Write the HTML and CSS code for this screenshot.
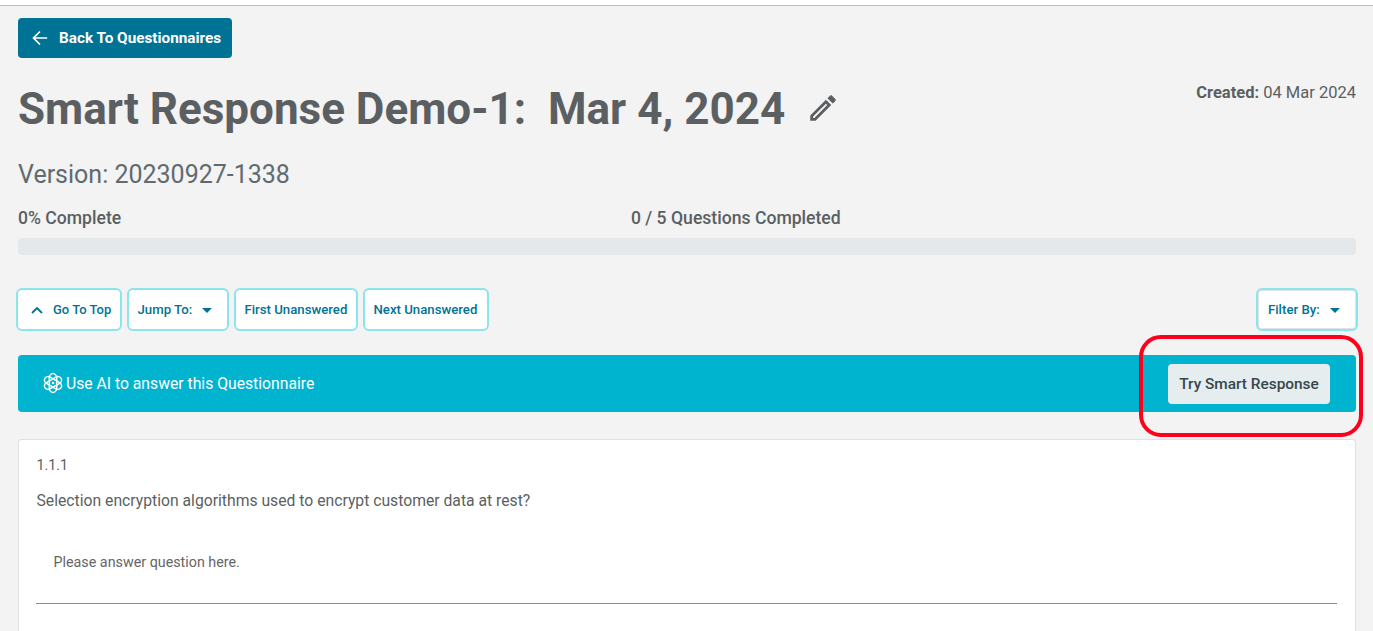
FILE: index.html
```html
<!DOCTYPE html>
<html lang="en">
<head>
  <meta charset="UTF-8">
  <meta name="viewport" content="width=device-width, initial-scale=1.0">
  <title>Smart Response Demo-1</title>
  <link rel="stylesheet" href="styles.css">
</head>
<body>
  <div class="topbar"></div>

  <main class="page">
    <button class="back-button">
      <svg width="16" height="16" viewBox="0 0 16 16"><path d="M15.2 8H1.8M8 1.5L1.5 8L8 14.5" fill="none" stroke="currentColor" stroke-width="1.7"/></svg>
      <span>Back To Questionnaires</span>
    </button>

    <!-- Title and date -->
    <header class="heading">
      <h1>Smart Response Demo-1:&nbsp; Mar 4, 2024</h1>
      <svg class="edit-icon" width="34" height="34" viewBox="0 0 24 24"><path fill="currentColor" d="M14.06 9.02l.92.92L5.92 19H5v-.92l9.06-9.06M17.66 3c-.25 0-.51.1-.7.29l-1.83 1.83 3.75 3.75 1.83-1.83c.39-.39.39-1.02 0-1.41l-2.34-2.34c-.2-.2-.45-.29-.71-.29zm-3.6 3.19L3 17.25V21h3.75L17.81 9.94l-3.75-3.75z"/></svg>
      <p class="created"><b>Created:</b> 04 Mar 2024</p>
    </header>
    <h2 class="version">Version: 20230927-1338</h2>

    <!-- Progress -->
    <div class="progress-labels">
      <span class="percent">0% Complete</span>
      <span class="count">0 / 5 Questions Completed</span>
    </div>
    <div class="progress"></div>

    <nav class="toolbar">
      <button class="tool go-top">
        <svg width="12" height="8" viewBox="0 0 12 8"><path d="M1 7L6 2L11 7" fill="none" stroke="currentColor" stroke-width="1.8"/></svg>
        <span>Go To Top</span>
      </button>
      <button class="tool jump"><span>Jump To:</span><i class="caret"></i></button>
      <button class="tool first"><span>First Unanswered</span></button>
      <button class="tool next"><span>Next Unanswered</span></button>
      <button class="tool filter"><span>Filter By:</span><i class="caret"></i></button>
    </nav>

    <!-- AI banner -->
    <section class="banner">
      <svg class="atom" width="20" height="22" viewBox="0 0 20 22">
        <g fill="none" stroke="currentColor" stroke-width="1.5">
          <rect x="6.3" y="1.6" width="7.4" height="18.8" rx="3.7" ry="4.4"/>
          <rect x="6.3" y="1.6" width="7.4" height="18.8" rx="3.7" ry="4.4" transform="rotate(60 10 11)"/>
          <rect x="6.3" y="1.6" width="7.4" height="18.8" rx="3.7" ry="4.4" transform="rotate(120 10 11)"/>
        </g>
        <circle cx="10" cy="11" r="1.3" fill="currentColor"/>
      </svg>
      <span class="banner-text">Use AI to answer this Questionnaire</span>
      <button class="smart-button"><span>Try Smart Response</span></button>
      <div class="highlight"></div>
    </section>

    <article class="question">
      <p class="number">1.1.1</p>
      <p class="text">Selection encryption algorithms used to encrypt customer data at rest?</p>
      <div class="answer"><span>Please answer question here.</span></div>
    </article>
  </main>
</body>
</html>
```
FILE: styles.css
```css
* {
  box-sizing: border-box;
}

body {
  margin: 0;
  background: #f3f3f3;
  color: #5b5f61;
  font-family: Roboto, sans-serif;
  font-size: 16px;
}

h1, h2, p {
  margin: 0;
}

button {
  display: flex;
  align-items: center;
  padding: 0;
  border: none;
  font-family: inherit;
  font-weight: 500;
  white-space: nowrap;
}

svg {
  flex: none;
}

.topbar {
  height: 6px;
  background: #fff;
  border-bottom: 1px solid #bdbdbd;
}

.page {
  padding: 12px 17px 0 18px;
}

.back-button {
  width: 214px;
  height: 40px;
  padding-left: 14px;
  gap: 11px;
  border-radius: 4px;
  background: #007394;
  color: #fff;
  font-size: 15.3px;
  font-weight: 700;
}

/* Heading */
.heading {
  display: flex;
  height: 92px;
  padding-top: 22px;
}

.heading h1 {
  font-size: 44px;
  line-height: 58px;
  font-weight: 700;
  white-space: nowrap;
}

.edit-icon {
  margin: 11px 0 0 21px;
}

.created {
  margin-left: auto;
  font-size: 16.5px;
  line-height: 25px;
}

.version {
  height: 50px;
  color: #5f6b70;
  font-size: 25px;
  line-height: 50px;
  font-weight: 400;
}

/* Progress */
.progress-labels {
  display: flex;
  height: 38px;
  font-size: 17.6px;
  line-height: 36px;
  font-weight: 500;
}

.percent {
  width: 613px;
}

.progress {
  height: 17px;
  border-radius: 4px;
  background: #e4e8eb;
}

/* Toolbar */
.toolbar {
  display: flex;
  gap: 5px;
  margin: 33px -2px 24px;
}

.tool {
  height: 43px;
  padding-left: 8.5px;
  border: 2px solid #8ce4ec;
  border-radius: 6px;
  background: #fff;
  color: #007394;
  font-size: 13.2px;
}

.go-top {
  width: 106px;
  padding-left: 13px;
  gap: 10px;
  font-size: 13px;
}

.jump {
  width: 102px;
}

.first {
  width: 124px;
}

.next {
  width: 126px;
}

.filter {
  width: 102px;
  margin-left: auto;
  padding-left: 10px;
  box-shadow: inset 0 0 0 1px #e0e3e6;
}

.caret {
  margin: 1px 0 0 10px;
  border: 5px solid transparent;
  border-top-color: currentColor;
  border-bottom: 0;
}

/* Banner */
.banner {
  position: relative;
  display: flex;
  align-items: center;
  height: 57px;
  padding: 0 26px 0 25px;
  border-radius: 4px;
  background: #00b3cf;
  color: #fff;
  font-size: 15.73px;
}

.atom {
  margin-bottom: 1px;
}

.banner-text {
  margin-left: 3px;
}

.smart-button {
  justify-content: center;
  width: 162px;
  height: 40px;
  margin-left: auto;
  border-radius: 4px;
  background: #e6edef;
  color: #37474c;
  font-size: 15.4px;
}

.highlight {
  position: absolute;
  top: -20px;
  right: -7px;
  width: 224px;
  height: 102px;
  border: 4px solid #ff001c;
  border-radius: 22px;
}

/* Question card */
.question {
  height: 192px;
  margin-top: 27px;
  padding: 12px 18px 0 17px;
  border: 1px solid #e0e0e0;
  border-bottom: none;
  border-radius: 4px 4px 0 0;
  background: #fff;
}

.number {
  padding-left: 0.5px;
  font-size: 14.3px;
  line-height: 26px;
}

.text {
  margin-top: 11px;
  padding-left: 0.5px;
  font-size: 15.73px;
  line-height: 24px;
}

.answer {
  height: 91px;
  padding: 39px 17.5px 0;
  border-bottom: 1px solid #8c8c8c;
  color: #666;
  font-size: 14.3px;
  line-height: 20px;
}
```
